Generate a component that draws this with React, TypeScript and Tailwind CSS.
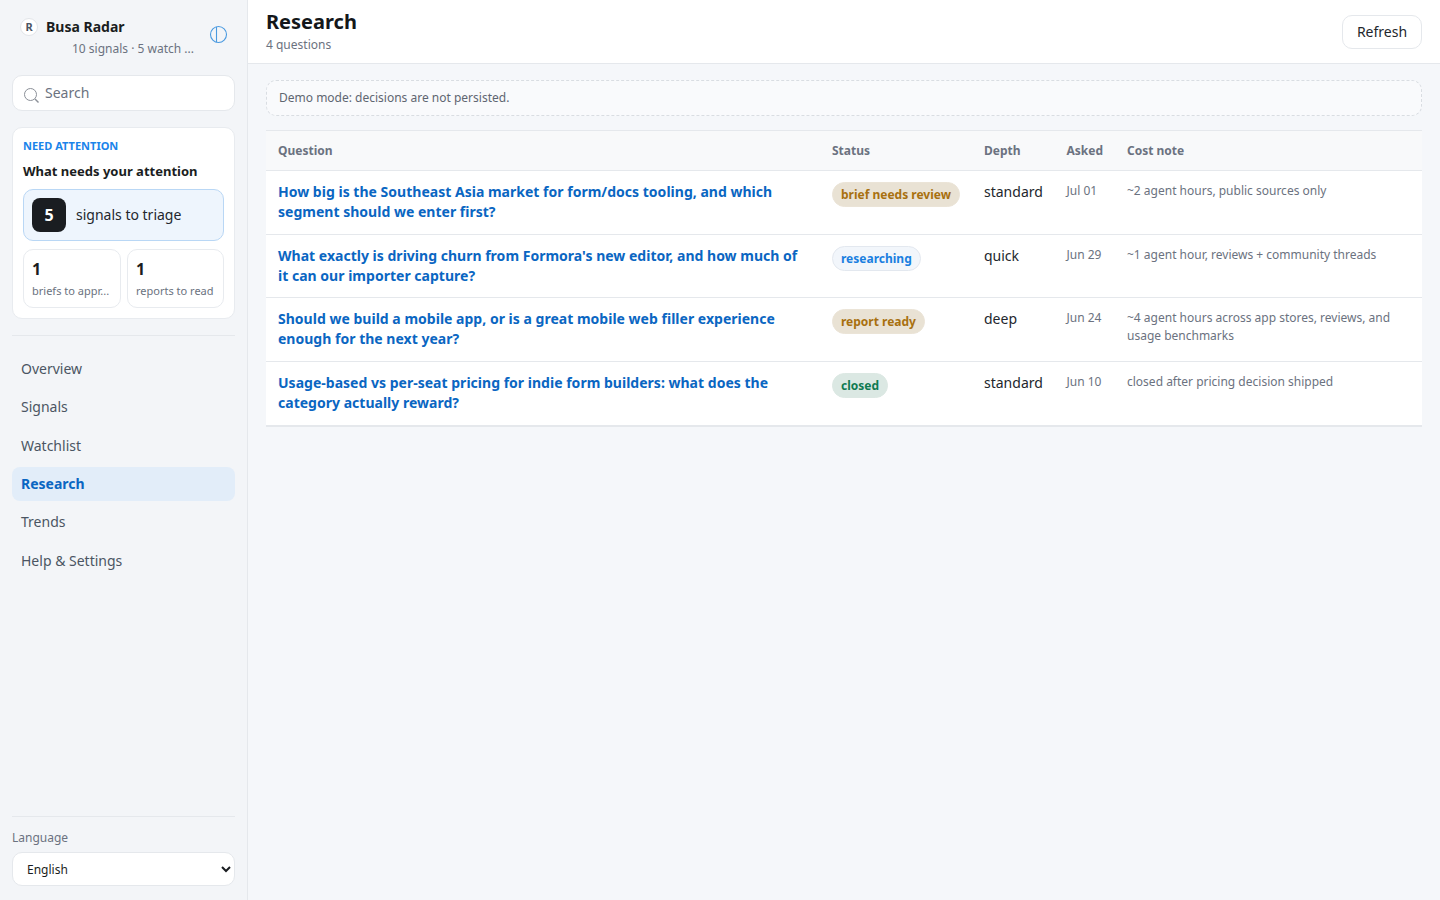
import React from "react";

function Pill({ tone, children }: { tone: "amber" | "blue" | "green"; children: React.ReactNode }) {
  const cls =
    tone === "amber"
      ? "bg-[#e9e2d4] border-[#ebe4d7] text-[#a8700f]"
      : tone === "blue"
      ? "bg-[#f2f6fb] border-[#e3e8ef] text-[#1a7fe0]"
      : "bg-[#dbe8e3] border-[#dce8e3] text-[#0f7a52]";
  return (
    <span className={`inline-flex items-center h-[25px] px-2 rounded-full border text-[12px] font-bold leading-none ${cls}`}>
      {children}
    </span>
  );
}

const rows = [
  {
    q: "How big is the Southeast Asia market for form/docs tooling, and which segment should we enter first?",
    status: "brief needs review",
    tone: "amber" as const,
    depth: "standard",
    asked: "Jul 01",
    cost: "~2 agent hours, public sources only",
    h: "h-[64px]",
  },
  {
    q: "What exactly is driving churn from Formora's new editor, and how much of it can our importer capture?",
    status: "researching",
    tone: "blue" as const,
    depth: "quick",
    asked: "Jun 29",
    cost: "~1 agent hour, reviews + community threads",
    h: "h-[63px]",
  },
  {
    q: "Should we build a mobile app, or is a great mobile web filler experience enough for the next year?",
    status: "report ready",
    tone: "amber" as const,
    depth: "deep",
    asked: "Jun 24",
    cost: "~4 agent hours across app stores, reviews, and usage benchmarks",
    h: "h-[64px]",
  },
  {
    q: "Usage-based vs per-seat pricing for indie form builders: what does the category actually reward?",
    status: "closed",
    tone: "green" as const,
    depth: "standard",
    asked: "Jun 10",
    cost: "closed after pricing decision shipped",
    h: "h-[64px]",
  },
];

const nav = ["Overview", "Signals", "Watchlist", "Research", "Trends", "Help & Settings"];

export default function App() {
  return (
    <div className="flex h-[900px] w-[1440px] overflow-hidden bg-[#f5f7fa] font-['Noto_Sans',sans-serif] text-[#1a1d21]">
      <aside className="flex w-[248px] shrink-0 flex-col border-r border-[#e5e8ec] bg-[#f3f5f8] px-3 pt-[14px] pb-[14px]">
        <div className="relative flex h-[46px] shrink-0 flex-col">
          <div className="flex items-center pl-2 h-[26px]">
            <span className="flex h-[18px] w-[18px] items-center justify-center rounded-full border border-[#e2e5e9] bg-white text-[11px] font-bold text-[#4b5563]">
              R
            </span>
            <span className="ml-2 text-[14px] font-bold leading-5">Busa Radar</span>
          </div>
          <div className="-mt-[1px] pl-[60px] text-[12px] leading-5 text-[#6b7280]">10 signals · 5 watch ...</div>
          <svg className="absolute left-[197px] top-[11px]" width="19" height="19" viewBox="0 0 19 19" fill="none" stroke="#4a9ae0" strokeWidth="1.1">
            <circle cx="9.5" cy="9.5" r="8" />
            <path d="M7.5 1.8V17.2" />
          </svg>
        </div>

        <div className="mt-[15px] flex h-9 shrink-0 items-center rounded-[10px] border border-[#e5e8ec] bg-white pl-[10px]">
          <svg width="17" height="17" viewBox="0 0 17 17" fill="none" stroke="#8b9098" strokeWidth="1" className="mt-[4px]">
            <circle cx="7.5" cy="7.5" r="6" />
            <path d="M12 12l3.5 3.5" strokeWidth="1.4" />
          </svg>
          <span className="ml-[5px] -mt-[2px] text-[14px] text-[#6b7280]">Search</span>
        </div>

        <section className="mt-4 h-[192px] shrink-0 rounded-[10px] border border-[#e8ebef] bg-white px-[10px] pt-[10px]">
          <div className="text-[11px] font-bold leading-[16px] text-[#1a84ea]">NEED ATTENTION</div>
          <div className="mt-[8px] text-[13px] font-bold leading-[18px]">What needs your attention</div>
          <div className="mt-[9px] flex h-[52px] items-center rounded-[10px] border border-[#b9d7f5] bg-[#eef5fd] pl-2">
            <span className="flex h-[34px] w-[34px] items-center justify-center rounded-[8px] bg-[#1a1d21] pb-[1px] text-[16px] font-bold text-white">
              5
            </span>
            <span className="ml-[10px] pb-[2px] text-[14px] text-[#23272d]">signals to triage</span>
          </div>
          <div className="mt-2 grid grid-cols-[98px_97px] gap-[6px]">
            <div className="h-[59px] rounded-[10px] border border-[#e8ebef] px-2 pt-[7px]">
              <div className="text-[16px] font-bold leading-[24px]">1</div>
              <div className="mt-[1px] truncate text-[11px] leading-[18px] text-[#6b7280]">briefs to appr...</div>
            </div>
            <div className="h-[59px] rounded-[10px] border border-[#e8ebef] px-2 pt-[7px]">
              <div className="text-[16px] font-bold leading-[24px]">1</div>
              <div className="mt-[1px] truncate text-[11px] leading-[18px] text-[#6b7280]">reports to read</div>
            </div>
          </div>
        </section>

        <div className="mt-4 h-px shrink-0 bg-[#e5e8ec]" />

        <nav className="mt-[15.6px] flex flex-col gap-[4.33px]">
          {nav.map((n) => (
            <div
              key={n}
              className={
                n === "Research"
                  ? "flex h-[34px] items-center rounded-[8px] bg-[#e2edf9] pl-[9px] text-[14px] font-bold text-[#0a66c2]"
                  : "flex h-[34px] items-center pl-[9px] text-[14px] text-[#4b5563]"
              }
            >
              {n}
            </div>
          ))}
        </nav>

        <div className="mt-auto h-px shrink-0 bg-[#e5e8ec]" />
        <label className="mt-[12px] text-[12px] leading-[18px] text-[#6b7280]">Language</label>
        <select className="mt-[5px] h-[34px] w-full shrink-0 rounded-[10px] border border-[#e5e8ec] bg-white pl-[10px] text-[12px] text-[#1a1d21]">
          <option>English</option>
        </select>
      </aside>

      <main className="flex min-w-0 flex-1 flex-col">
        <header className="flex h-[64px] shrink-0 items-start justify-between border-b border-[#e5e8ec] bg-white px-[18px]">
          <div className="pt-[8px]">
            <h1 className="text-[20px] font-bold leading-[28px] text-[#14171a]">Research</h1>
            <div className="text-[12px] leading-[18px] text-[#6b7280]">4 questions</div>
          </div>
          <button className="mt-[15px] h-[34px] w-[80px] rounded-[10px] border border-[#e5e8ec] bg-white pb-[2px] text-[14px] text-[#23272d]">
            Refresh
          </button>
        </header>

        <div className="px-[18px] pt-4">
          <div className="flex h-9 items-center rounded-[10px] border border-dashed border-[#d9dde2] bg-[#f9fafc] pl-3 text-[12px] text-[#5f6671]">
            Demo mode: decisions are not persisted.
          </div>

          <table className="mt-[14px] w-full table-fixed border-collapse border-t border-b-2 border-[#e5e8ec] bg-white text-left">
            <colgroup>
              <col className="w-[554px]" />
              <col className="w-[152px]" />
              <col className="w-[82.5px]" />
              <col className="w-[60.5px]" />
              <col />
            </colgroup>
            <thead>
              <tr className="h-[40px] border-b border-[#e5e8ec] bg-[#f8f9fa] text-[12px] text-[#6b7280]">
                <th className="pl-3 font-bold">Question</th>
                <th className="pl-3 font-bold">Status</th>
                <th className="pl-3 font-bold">Depth</th>
                <th className="pl-3 font-bold">Asked</th>
                <th className="pl-3 font-bold">Cost note</th>
              </tr>
            </thead>
            <tbody>
              {rows.map((r, i) => (
                <tr key={i} className={`${r.h} border-b border-[#e5e8ec] align-top last:border-b-0`}>
                  <td className="px-3 pt-[10.6px] text-[14px] font-bold leading-[20.3px] tracking-[0.015px] text-[#0a66c2]">{r.q}</td>
                  <td className="pl-3 pt-[11px] leading-none">
                    <Pill tone={r.tone}>{r.status}</Pill>
                  </td>
                  <td className="pl-3 pt-[11px] text-[14px] leading-5 text-[#23272d]">{r.depth}</td>
                  <td className="pl-3 pt-[11px] text-[12px] leading-[18px] text-[#6b7280]">{r.asked}</td>
                  <td className="pl-3 pr-3 pt-[11px] text-[12px] leading-[18px] text-[#6b7280]">{r.cost}</td>
                </tr>
              ))}
            </tbody>
          </table>
        </div>
      </main>
    </div>
  );
}
